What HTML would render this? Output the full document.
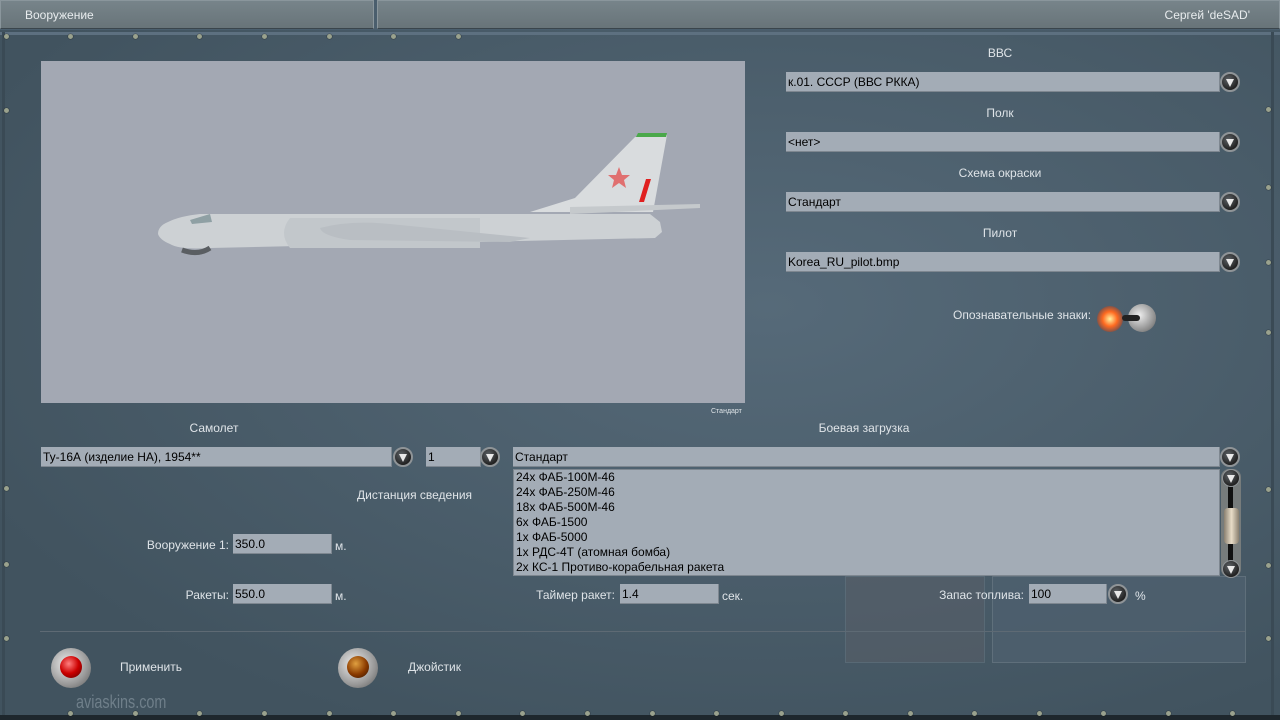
<!DOCTYPE html>
<html><head><meta charset="utf-8"><style>
*{margin:0;padding:0;box-sizing:border-box}
body{width:1280px;height:720px;overflow:hidden;position:relative;background:#4a5e6d;font-family:"Liberation Sans","DejaVu Sans",sans-serif;font-size:12px;color:#dfe4e8}
.a{position:absolute;white-space:nowrap}
.hdr{position:absolute;top:0;height:29px;background:linear-gradient(#77848a,#687479);border:1px solid #8a969c;border-bottom-color:#3a454c}
.inp{position:absolute;height:20px;background:#a3acb6;color:#000;padding-left:2px;line-height:20px;border-bottom:1px solid #7e8790;border-right:1px solid #7e8790}
.dd{position:absolute;width:20px;height:20px;border-radius:50%;background:radial-gradient(circle at 40% 35%,#5d6266,#222 70%);border:2px solid #8f9497}
.dd::after{content:"";position:absolute;left:4px;top:5px;border-left:4px solid transparent;border-right:4px solid transparent;border-top:8px solid #e8e8e8}
.lbl{position:absolute;transform:translateX(-50%);white-space:nowrap}
.r{position:absolute;width:5px;height:5px;border-radius:50%;background:#9aa28e;box-shadow:0 0 1px #000}
</style></head><body>
<div style="position:absolute;left:0;top:30px;width:1280px;height:690px;background:radial-gradient(ellipse at 60% 40%,#566a79,#41535f 80%)"></div>
<div style="position:absolute;left:0;top:32px;width:1280px;height:3px;background:#5d7080"></div>
<div style="position:absolute;left:2px;top:32px;width:3px;height:688px;background:#3a4a55"></div>
<div style="position:absolute;left:1271px;top:32px;width:3px;height:688px;background:#3a4a55"></div>
<div style="position:absolute;left:0;top:715px;width:1280px;height:5px;background:#1e272d"></div>
<div class="hdr" style="left:0;width:374px"></div>
<div class="hdr" style="left:377px;width:903px"></div>
<div class="a" style="left:25px;top:8px;color:#e8ecee">Вооружение</div>
<div class="a" style="right:30px;top:8px;color:#e8ecee">Сергей 'deSAD'</div>
<div class="r" style="left:4px;top:34px"></div><div class="r" style="left:68px;top:34px"></div><div class="r" style="left:133px;top:34px"></div><div class="r" style="left:197px;top:34px"></div><div class="r" style="left:262px;top:34px"></div><div class="r" style="left:327px;top:34px"></div><div class="r" style="left:391px;top:34px"></div><div class="r" style="left:456px;top:34px"></div>
<div class="r" style="left:1266px;top:107px"></div><div class="r" style="left:1266px;top:185px"></div><div class="r" style="left:1266px;top:260px"></div><div class="r" style="left:1266px;top:330px"></div><div class="r" style="left:1266px;top:487px"></div><div class="r" style="left:1266px;top:563px"></div><div class="r" style="left:1266px;top:636px"></div>
<div class="r" style="left:4px;top:108px"></div><div class="r" style="left:4px;top:486px"></div><div class="r" style="left:4px;top:562px"></div><div class="r" style="left:4px;top:636px"></div>
<div class="r" style="left:68px;top:711px"></div><div class="r" style="left:133px;top:711px"></div><div class="r" style="left:197px;top:711px"></div><div class="r" style="left:262px;top:711px"></div><div class="r" style="left:327px;top:711px"></div><div class="r" style="left:391px;top:711px"></div><div class="r" style="left:456px;top:711px"></div><div class="r" style="left:520px;top:711px"></div><div class="r" style="left:585px;top:711px"></div><div class="r" style="left:650px;top:711px"></div><div class="r" style="left:714px;top:711px"></div><div class="r" style="left:779px;top:711px"></div><div class="r" style="left:843px;top:711px"></div><div class="r" style="left:908px;top:711px"></div><div class="r" style="left:972px;top:711px"></div><div class="r" style="left:1037px;top:711px"></div><div class="r" style="left:1101px;top:711px"></div><div class="r" style="left:1166px;top:711px"></div><div class="r" style="left:1230px;top:711px"></div>
<div style="position:absolute;left:845px;top:576px;width:140px;height:87px;background:#5a5f68;opacity:.5;border:1px solid #6a7a85"></div>
<div style="position:absolute;left:992px;top:576px;width:254px;height:87px;background:#4f6170;border:1px solid #6a7a85;opacity:.7"></div>
<div style="position:absolute;left:41px;top:61px;width:704px;height:342px;background:#a3a8b3"></div>
<svg class="a" style="left:150px;top:130px" width="560" height="130" viewBox="0 0 560 130">
<path d="M380 82 L425 68 L485 7 L517 5 L503 82 Z" fill="#d9dcde"/>
<path d="M488 3 L517 3 L516 7 L486 7Z" fill="#4aa84a"/>
<polygon points="469,37 472,45 480,45 474,50 476,58 469,53 462,58 464,50 458,45 466,45" fill="#e07070"/>
<path d="M496 49 L501 49 L494 72 L489 72Z" fill="#e02020"/>
<path d="M8 104 Q8 96 18 92 Q30 86 50 84 L500 84 L510 92 L512 102 L505 108 L60 118 Q30 120 20 114 Q10 110 8 104Z" fill="#cdd1d4"/>
<path d="M140 88 L330 88 L330 118 L140 118 Q128 103 140 88Z" fill="#c2c7cb"/>
<path d="M170 98 Q200 90 240 94 L380 108 L360 112 L200 110 Q172 106 170 98Z" fill="#b9bec3"/>
<path d="M420 77 L550 74 L550 78 L420 84Z" fill="#c5c9cc"/>
<path d="M32 120 Q48 126 60 118" stroke="#5a5e62" stroke-width="5" fill="none"/>
<path d="M40 90 L60 84 L62 92 L42 94Z" fill="#8fa0a4"/>
</svg>
<div class="a" style="left:711px;top:408px;font-size:7px;color:#dfe4e8">Стандарт</div>
<div class="lbl" style="left:1000px;top:46px">ВВС</div>
<div class="lbl" style="left:1000px;top:106px">Полк</div>
<div class="lbl" style="left:1000px;top:166px">Схема окраски</div>
<div class="lbl" style="left:1000px;top:226px">Пилот</div>
<div class="inp" style="left:786px;top:72px;width:434px">к.01. СССР (ВВС РККА)</div><div class="dd" style="left:1220px;top:72px"></div>
<div class="inp" style="left:786px;top:132px;width:434px">&lt;нет&gt;</div><div class="dd" style="left:1220px;top:132px"></div>
<div class="inp" style="left:786px;top:192px;width:434px">Стандарт</div><div class="dd" style="left:1220px;top:192px"></div>
<div class="inp" style="left:786px;top:252px;width:434px">Korea_RU_pilot.bmp</div><div class="dd" style="left:1220px;top:252px"></div>
<div class="a" style="left:953px;top:308px">Опознавательные знаки:</div>
<div class="a" style="left:1097px;top:306px;width:26px;height:26px;border-radius:50%;background:radial-gradient(circle,#fff2a0,#ff6a20 40%,rgba(200,40,0,.3) 75%,transparent)"></div>
<div class="a" style="left:1128px;top:304px;width:28px;height:28px;border-radius:50%;background:radial-gradient(circle at 40% 40%,#eee,#888 70%,#444)"></div>
<div class="a" style="left:1122px;top:315px;width:18px;height:6px;background:#222;border-radius:3px"></div>
<div class="lbl" style="left:214px;top:421px">Самолет</div>
<div class="lbl" style="left:864px;top:421px">Боевая загрузка</div>
<div class="inp" style="left:41px;top:447px;width:351px">Ту-16А (изделие НА), 1954**</div><div class="dd" style="left:393px;top:447px"></div>
<div class="inp" style="left:426px;top:447px;width:55px">1</div><div class="dd" style="left:480px;top:447px"></div>
<div class="inp" style="left:513px;top:447px;width:707px">Стандарт</div><div class="dd" style="left:1220px;top:447px"></div>
<div class="inp" style="left:513px;top:469px;width:707px;height:107px;line-height:15px;padding-top:0;font-size:12px;border:1px solid #7e8790">24x ФАБ-100М-46<br>24x ФАБ-250М-46<br>18x ФАБ-500М-46<br>6x ФАБ-1500<br>1x ФАБ-5000<br>1x РДС-4Т (атомная бомба)<br>2x КС-1 Противо-корабельная ракета</div>
<div class="a" style="left:1221px;top:469px;width:20px;height:108px;background:#777c7c;border-radius:8px"></div>
<div class="a" style="left:1228px;top:482px;width:5px;height:80px;background:#111"></div>
<div class="dd" style="left:1222px;top:469px;width:18px;height:18px;border-width:1px"></div>
<div class="dd" style="left:1222px;top:560px;width:18px;height:18px;border-width:1px"></div>
<div class="a" style="left:1224px;top:508px;width:15px;height:36px;background:linear-gradient(90deg,#8a8070,#e8dcc8,#8a8070);border-radius:4px"></div>
<div class="a" style="left:357px;top:488px">Дистанция сведения</div>
<div class="a" style="right:1051px;top:538px">Вооружение 1:</div>
<div class="inp" style="left:233px;top:534px;width:99px">350.0</div>
<div class="a" style="left:335px;top:539px">м.</div>
<div class="a" style="right:1051px;top:588px">Ракеты:</div>
<div class="inp" style="left:233px;top:584px;width:99px">550.0</div>
<div class="a" style="left:335px;top:589px">м.</div>
<div class="a" style="right:665px;top:588px">Таймер ракет:</div>
<div class="inp" style="left:620px;top:584px;width:99px">1.4</div>
<div class="a" style="left:722px;top:589px">сек.</div>
<div class="a" style="right:256px;top:588px">Запас топлива:</div>
<div class="inp" style="left:1029px;top:584px;width:78px">100</div><div class="dd" style="left:1108px;top:584px"></div>
<div class="a" style="left:1135px;top:589px">%</div>
<div style="position:absolute;left:40px;top:631px;width:1205px;height:1px;background:#5e6a74"></div>
<div class="a" style="left:51px;top:648px;width:40px;height:40px;border-radius:50%;background:radial-gradient(circle at 40% 40%,#eee,#999 60%,#555)"></div>
<div class="a" style="left:60px;top:656px;width:22px;height:22px;border-radius:50%;background:radial-gradient(circle at 40% 35%,#ff8080,#c00 50%,#500)"></div>
<div class="a" style="left:120px;top:660px">Применить</div>
<div class="a" style="left:338px;top:648px;width:40px;height:40px;border-radius:50%;background:radial-gradient(circle at 40% 40%,#eee,#999 60%,#555)"></div>
<div class="a" style="left:347px;top:656px;width:22px;height:22px;border-radius:50%;background:radial-gradient(circle at 40% 35%,#e0a040,#8a3a00 55%,#301000)"></div>
<div class="a" style="left:408px;top:660px">Джойстик</div>
<div class="a" style="left:76px;top:692px;font-size:18px;color:#6f7f8a;transform:scaleX(.8);transform-origin:left">aviaskins.com</div>
</body></html>
